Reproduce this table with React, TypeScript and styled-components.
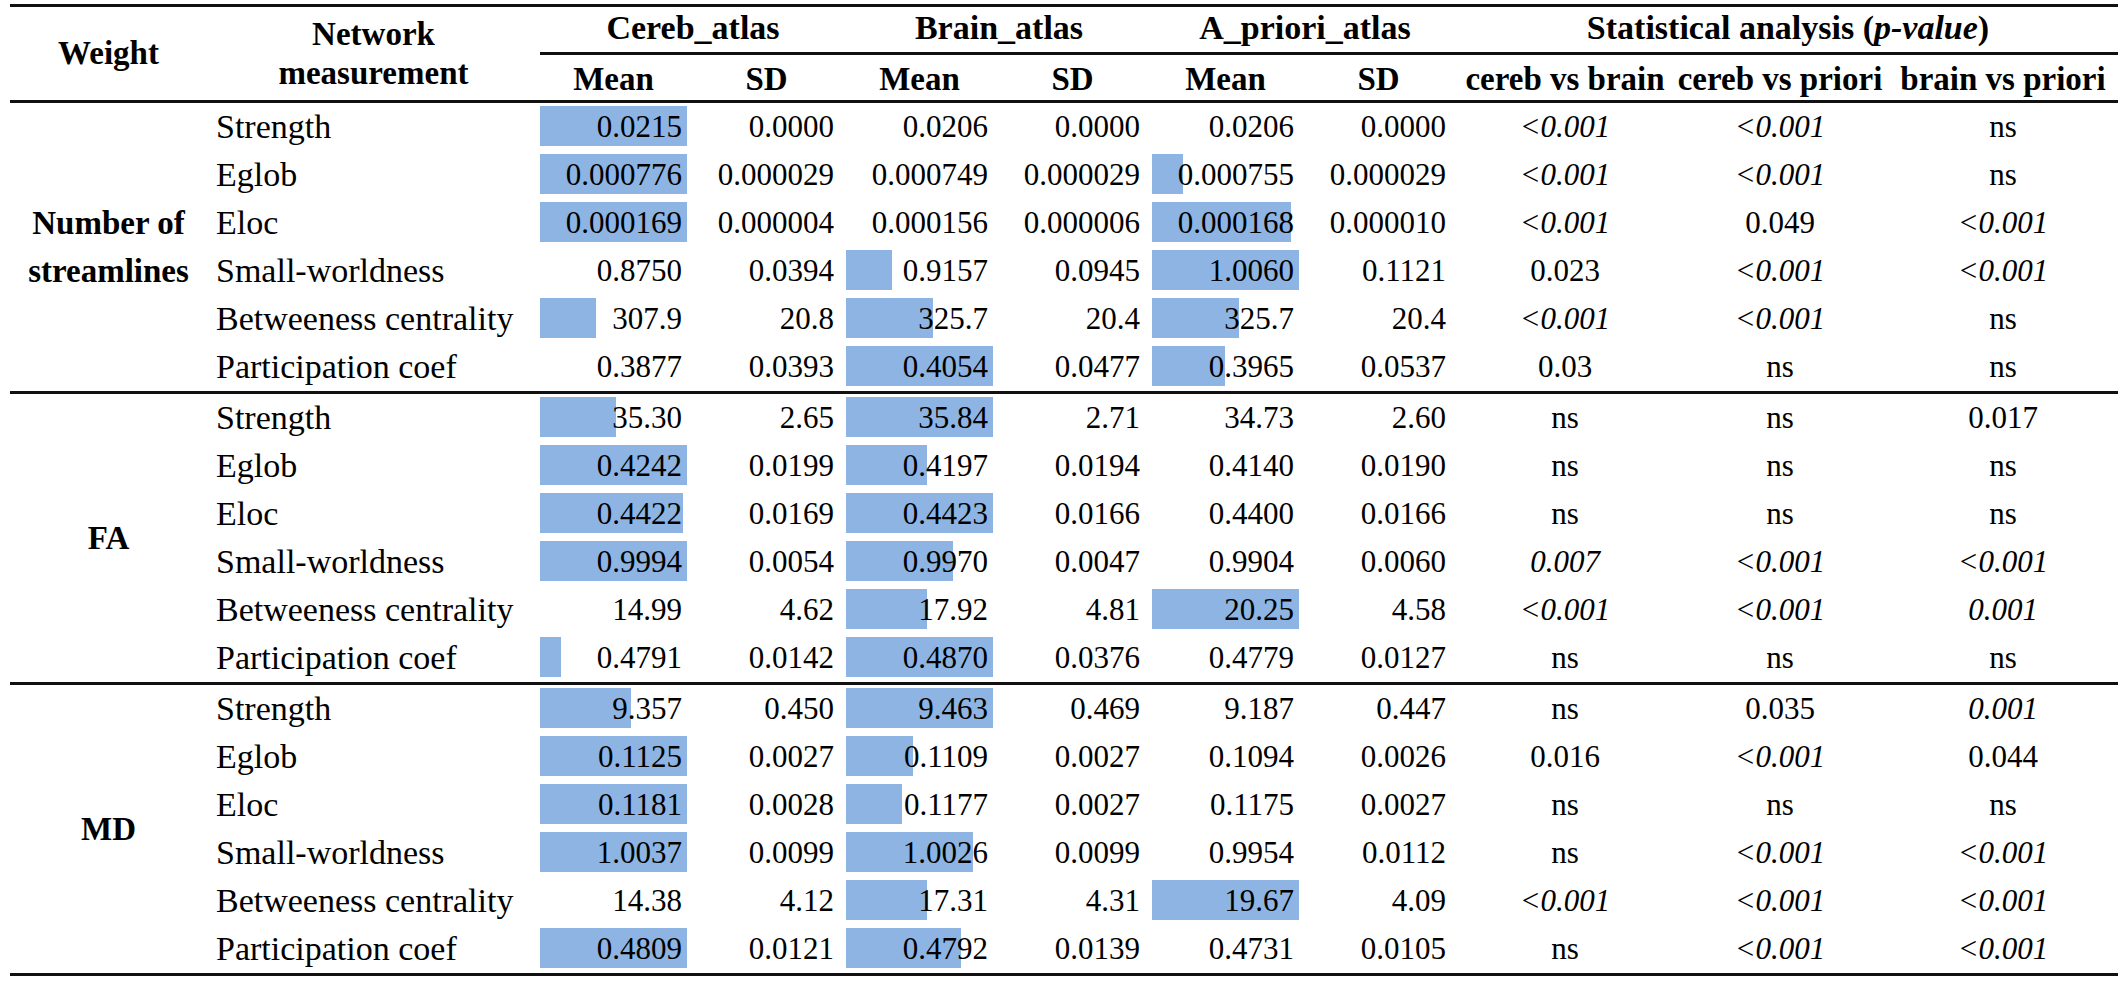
import React from "react";
import styled, { createGlobalStyle } from "styled-components";

const FONT = `"Liberation Serif", serif`;
const COLS = "197px 333px 147px 159px 147px 159px 147px 159px 214px 216px 230px";
const RULE = "3px solid #111111";

const GlobalStyle = createGlobalStyle`
  html, body { margin: 0; padding: 0; background: #fff; }
`;

type F = { $f?: string };

const Page = styled.div.attrs<F>(() => ({ $f: FONT }))<F>`
  font-family: ${(p) => p.$f};
  color: #000;
  padding: 4px 8px 0 10px;
`;

const Table = styled.div.attrs<F>(() => ({ $f: FONT }))<F>`
  font-family: ${(p) => p.$f};
  width: 2108px;
  border-top: ${RULE};
  border-bottom: ${RULE};
`;

const Header = styled.div.attrs<F>(() => ({ $f: FONT }))<F>`
  font-family: ${(p) => p.$f};
  display: grid;
  grid-template-columns: ${COLS};
  grid-template-rows: 48px 45px;
  border-bottom: ${RULE};
  font-weight: bold;
  font-size: 33px;
`;

const HeadSpan = styled.div.attrs<F>(() => ({ $f: FONT }))<F>`
  font-family: ${(p) => p.$f};
  grid-row: 1 / span 2;
  display: flex;
  align-items: center;
  justify-content: center;
  text-align: center;
  line-height: 39px;
`;

const GroupHead = styled.div.attrs<F>(() => ({ $f: FONT }))<F & { $span: number }>`
  font-family: ${(p) => p.$f};
  grid-column: span ${(p) => p.$span};
  border-bottom: ${RULE};
  display: flex;
  align-items: center;
  justify-content: center;
  padding-bottom: 4px;
  font-size: 34px;
  white-space: nowrap;
`;

const SubHead = styled.div.attrs<F>(() => ({ $f: FONT }))<F>`
  font-family: ${(p) => p.$f};
  display: flex;
  align-items: center;
  justify-content: center;
  padding-top: 4px;
  white-space: nowrap;
`;

const Section = styled.div.attrs<F>(() => ({ $f: FONT }))<F>`
  font-family: ${(p) => p.$f};
  display: grid;
  grid-template-columns: ${COLS};
  grid-auto-rows: 48px;
  & + & {
    border-top: ${RULE};
  }
`;

const GroupLabel = styled.div.attrs<F>(() => ({ $f: FONT }))<F>`
  font-family: ${(p) => p.$f};
  grid-column: 1;
  grid-row: 1 / span 6;
  display: flex;
  align-items: center;
  justify-content: center;
  text-align: center;
  font-weight: bold;
  font-size: 33px;
  line-height: 48px;
`;

const Label = styled.div.attrs<F>(() => ({ $f: FONT }))<F>`
  font-family: ${(p) => p.$f};
  font-size: 34px;
  line-height: 48px;
  padding-left: 9px;
  white-space: nowrap;
`;

const MeanCell = styled.div.attrs<F>(() => ({ $f: FONT }))<F>`
  font-family: ${(p) => p.$f};
  position: relative;
  font-size: 31px;
  line-height: 48px;
  text-align: right;
  padding-right: 5px;
  white-space: nowrap;
`;

const Bar = styled.span`
  position: absolute;
  left: 0;
  top: 3px;
  height: 40px;
  background: #8db4e2;
`;

const NumText = styled.span.attrs<F>(() => ({ $f: FONT }))<F>`
  font-family: ${(p) => p.$f};
  position: relative;
`;

const SdCell = styled.div.attrs<F>(() => ({ $f: FONT }))<F>`
  font-family: ${(p) => p.$f};
  font-size: 31px;
  line-height: 48px;
  text-align: right;
  padding-right: 12px;
  white-space: nowrap;
`;

const PCell = styled.div.attrs<F>(() => ({ $f: FONT }))<F & { $italic: boolean }>`
  font-family: ${(p) => p.$f};
  font-size: 31px;
  line-height: 48px;
  text-align: center;
  white-space: nowrap;
  font-style: ${(p) => (p.$italic ? "italic" : "normal")};
`;

const Ital = styled.span.attrs<F>(() => ({ $f: FONT }))<F>`
  font-family: ${(p) => p.$f};
  font-style: italic;
`;

type P = { v: string; i?: boolean };
type Row = {
  label: string;
  mean: [string, string, string];
  sd: [string, string, string];
  bars: [number, number, number];
  p: [P, P, P];
};

const LT: P = { v: "<0.001", i: true };
const NS: P = { v: "ns" };

const sections: { name: string[]; rows: Row[] }[] = [
  {
    name: ["Number of", "streamlines"],
    rows: [
      { label: "Strength", mean: ["0.0215", "0.0206", "0.0206"], sd: ["0.0000", "0.0000", "0.0000"], bars: [147, 0, 0], p: [LT, LT, NS] },
      { label: "Eglob", mean: ["0.000776", "0.000749", "0.000755"], sd: ["0.000029", "0.000029", "0.000029"], bars: [147, 0, 31], p: [LT, LT, NS] },
      { label: "Eloc", mean: ["0.000169", "0.000156", "0.000168"], sd: ["0.000004", "0.000006", "0.000010"], bars: [147, 0, 139], p: [LT, { v: "0.049" }, LT] },
      { label: "Small-worldness", mean: ["0.8750", "0.9157", "1.0060"], sd: ["0.0394", "0.0945", "0.1121"], bars: [0, 46, 147], p: [{ v: "0.023" }, LT, LT] },
      { label: "Betweeness centrality", mean: ["307.9", "325.7", "325.7"], sd: ["20.8", "20.4", "20.4"], bars: [56, 87, 87], p: [LT, LT, NS] },
      { label: "Participation coef", mean: ["0.3877", "0.4054", "0.3965"], sd: ["0.0393", "0.0477", "0.0537"], bars: [0, 147, 73], p: [{ v: "0.03" }, NS, NS] },
    ],
  },
  {
    name: ["FA"],
    rows: [
      { label: "Strength", mean: ["35.30", "35.84", "34.73"], sd: ["2.65", "2.71", "2.60"], bars: [76, 147, 0], p: [NS, NS, { v: "0.017" }] },
      { label: "Eglob", mean: ["0.4242", "0.4197", "0.4140"], sd: ["0.0199", "0.0194", "0.0190"], bars: [147, 81, 0], p: [NS, NS, NS] },
      { label: "Eloc", mean: ["0.4422", "0.4423", "0.4400"], sd: ["0.0169", "0.0166", "0.0166"], bars: [143, 147, 0], p: [NS, NS, NS] },
      { label: "Small-worldness", mean: ["0.9994", "0.9970", "0.9904"], sd: ["0.0054", "0.0047", "0.0060"], bars: [147, 107, 0], p: [{ v: "0.007", i: true }, LT, LT] },
      { label: "Betweeness centrality", mean: ["14.99", "17.92", "20.25"], sd: ["4.62", "4.81", "4.58"], bars: [0, 81, 147], p: [LT, LT, { v: "0.001", i: true }] },
      { label: "Participation coef", mean: ["0.4791", "0.4870", "0.4779"], sd: ["0.0142", "0.0376", "0.0127"], bars: [21, 147, 0], p: [NS, NS, NS] },
    ],
  },
  {
    name: ["MD"],
    rows: [
      { label: "Strength", mean: ["9.357", "9.463", "9.187"], sd: ["0.450", "0.469", "0.447"], bars: [91, 147, 0], p: [NS, { v: "0.035" }, { v: "0.001", i: true }] },
      { label: "Eglob", mean: ["0.1125", "0.1109", "0.1094"], sd: ["0.0027", "0.0027", "0.0026"], bars: [147, 67, 0], p: [{ v: "0.016" }, LT, { v: "0.044" }] },
      { label: "Eloc", mean: ["0.1181", "0.1177", "0.1175"], sd: ["0.0028", "0.0027", "0.0027"], bars: [147, 56, 0], p: [NS, NS, NS] },
      { label: "Small-worldness", mean: ["1.0037", "1.0026", "0.9954"], sd: ["0.0099", "0.0099", "0.0112"], bars: [147, 127, 0], p: [NS, LT, LT] },
      { label: "Betweeness centrality", mean: ["14.38", "17.31", "19.67"], sd: ["4.12", "4.31", "4.09"], bars: [0, 81, 147], p: [LT, LT, LT] },
      { label: "Participation coef", mean: ["0.4809", "0.4792", "0.4731"], sd: ["0.0121", "0.0139", "0.0105"], bars: [147, 115, 0], p: [NS, LT, LT] },
    ],
  },
];

const DataRow: React.FC<{ row: Row }> = ({ row }) => (
  <>
    <Label>{row.label}</Label>
    {[0, 1, 2].map((k) => (
      <React.Fragment key={k}>
        <MeanCell>
          {row.bars[k] > 0 && <Bar style={{ width: `${row.bars[k]}px` }} />}
          <NumText>{row.mean[k]}</NumText>
        </MeanCell>
        <SdCell>{row.sd[k]}</SdCell>
      </React.Fragment>
    ))}
    {row.p.map((p, k) => (
      <PCell key={`p${k}`} $italic={!!p.i}>
        {p.v}
      </PCell>
    ))}
  </>
);

export default function App() {
  return (
    <>
      <GlobalStyle />
      <Page>
        <Table>
          <Header>
            <HeadSpan>Weight</HeadSpan>
            <HeadSpan>
              Network
              <br />
              measurement
            </HeadSpan>
            <GroupHead $span={2}>Cereb_atlas</GroupHead>
            <GroupHead $span={2}>Brain_atlas</GroupHead>
            <GroupHead $span={2}>A_priori_atlas</GroupHead>
            <GroupHead $span={3}>
              Statistical analysis (<Ital>p-value</Ital>)
            </GroupHead>
            <SubHead>Mean</SubHead>
            <SubHead>SD</SubHead>
            <SubHead>Mean</SubHead>
            <SubHead>SD</SubHead>
            <SubHead>Mean</SubHead>
            <SubHead>SD</SubHead>
            <SubHead>cereb vs brain</SubHead>
            <SubHead>cereb vs priori</SubHead>
            <SubHead>brain vs priori</SubHead>
          </Header>
          {sections.map((s) => (
            <Section key={s.name.join(" ")}>
              <GroupLabel>
                {s.name.map((n, i) => (
                  <React.Fragment key={n}>
                    {i > 0 && <br />}
                    {n}
                  </React.Fragment>
                ))}
              </GroupLabel>
              {s.rows.map((r) => (
                <DataRow key={r.label} row={r} />
              ))}
            </Section>
          ))}
        </Table>
      </Page>
    </>
  );
}
